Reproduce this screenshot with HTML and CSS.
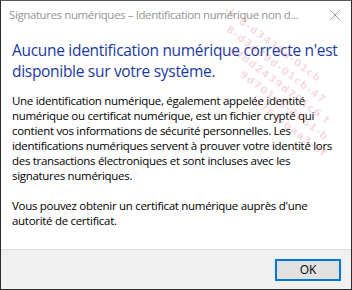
FILE: index.html
```html
<!DOCTYPE html>
<html lang="fr">
<head>
<meta charset="utf-8">
<link rel="stylesheet" href="styles.css">
</head>
<body>
<div class="window">
  <div class="titlebar">
    <span class="title">Signatures numériques – Identification numérique non d...</span>
    <svg class="close" width="12" height="12" viewBox="0 0 12 12"><path d="M1 1 L11 11 M11 1 L1 11" stroke="#a0a0a0" stroke-width="1" fill="none"/></svg>
  </div>
  <div class="content">
    <h1 class="heading">Aucune identification numérique correcte n'est<br>disponible sur votre système.</h1>
    <p class="para">Une identification numérique, également appelée identité<br>numérique ou certificat numérique, est un fichier crypté qui<br>contient vos informations de sécurité personnelles. Les<br>identifications numériques servent à prouver votre identité lors<br>des transactions électroniques et sont incluses avec les<br>signatures numériques.</p>
    <p class="para">Vous pouvez obtenir un certificat numérique auprès d'une<br>autorité de certificat.</p>
  </div>
  <div class="footer">
    <button class="ok">OK</button>
  </div>
  <div class="watermark">
    <span>-b-8-d3439d-01cb</span>
    <span>8-d3439d-01cb-47</span>
    <span>efdd2439d701c6 t</span>
    <span>9d701c6-4761-b</span>
    <span>-4761-baa3-ef</span>
  </div>
</div>
</body>
</html>
```

FILE: styles.css
```css
html, body {
  margin: 0;
  padding: 0;
  background: #ffffff;
}
.window {
  position: relative;
  width: 352px;
  height: 290px;
  box-sizing: border-box;
  border: 1px solid #2b2b2b;
  border-top-color: #5a5a5a;
  display: flex;
  flex-direction: column;
  overflow: hidden;
  font-family: "Open Sans", "Noto Sans", sans-serif;
  background: #ffffff;
}
.titlebar {
  height: 30px;
  display: flex;
  align-items: center;
  justify-content: space-between;
  padding: 0 10px 0 8px;
  flex-shrink: 0;
}
.title {
  font-size: 11.5px;
  color: #959595;
  letter-spacing: -0.4px;
  white-space: nowrap;
  margin-top: -3px;
}
.close {
  margin-top: -2px;
}
.content {
  flex: 1;
  padding: 9px 11px 0 11px;
}
.heading {
  margin: 0 0 11px 0;
  font-size: 15.5px;
  font-weight: normal;
  line-height: 21px;
  color: #1a3aa0;
  letter-spacing: -0.3px;
  white-space: nowrap;
}
.para {
  margin: 0 0 15px 0;
  font-size: 11.5px;
  line-height: 15px;
  color: #000000;
  letter-spacing: -0.3px;
  white-space: nowrap;
}
.footer {
  height: 40px;
  flex-shrink: 0;
  background: #f0f0f0;
  border-top: 1px solid #dfdfdf;
  display: flex;
  align-items: flex-start;
  justify-content: flex-end;
  padding: 9px 10px 0 0;
  box-sizing: border-box;
}
.ok {
  width: 66px;
  height: 22px;
  box-sizing: border-box;
  border: 2px solid #0078d7;
  background: #e1e1e1;
  font-family: "Open Sans", "Noto Sans", sans-serif;
  font-size: 12px;
  color: #000;
  padding: 0;
  line-height: 16px;
}
.watermark {
  position: absolute;
  top: 2px;
  left: 228px;
  display: flex;
  flex-direction: column;
  align-items: flex-start;
  transform: rotate(37deg);
  transform-origin: 0 0;
  pointer-events: none;
}
.watermark span {
  font-family: "DejaVu Sans", sans-serif;
  font-size: 10px;
  font-weight: bold;
  letter-spacing: 1.2px;
  color: rgba(218, 80, 110, 0.22);
  white-space: nowrap;
  line-height: 14px;
}
.watermark span:nth-child(2) { margin-left: 14px; }
.watermark span:nth-child(3) { margin-left: 30px; }
.watermark span:nth-child(4) { margin-left: 52px; }
.watermark span:nth-child(5) { margin-left: 74px; }
```
